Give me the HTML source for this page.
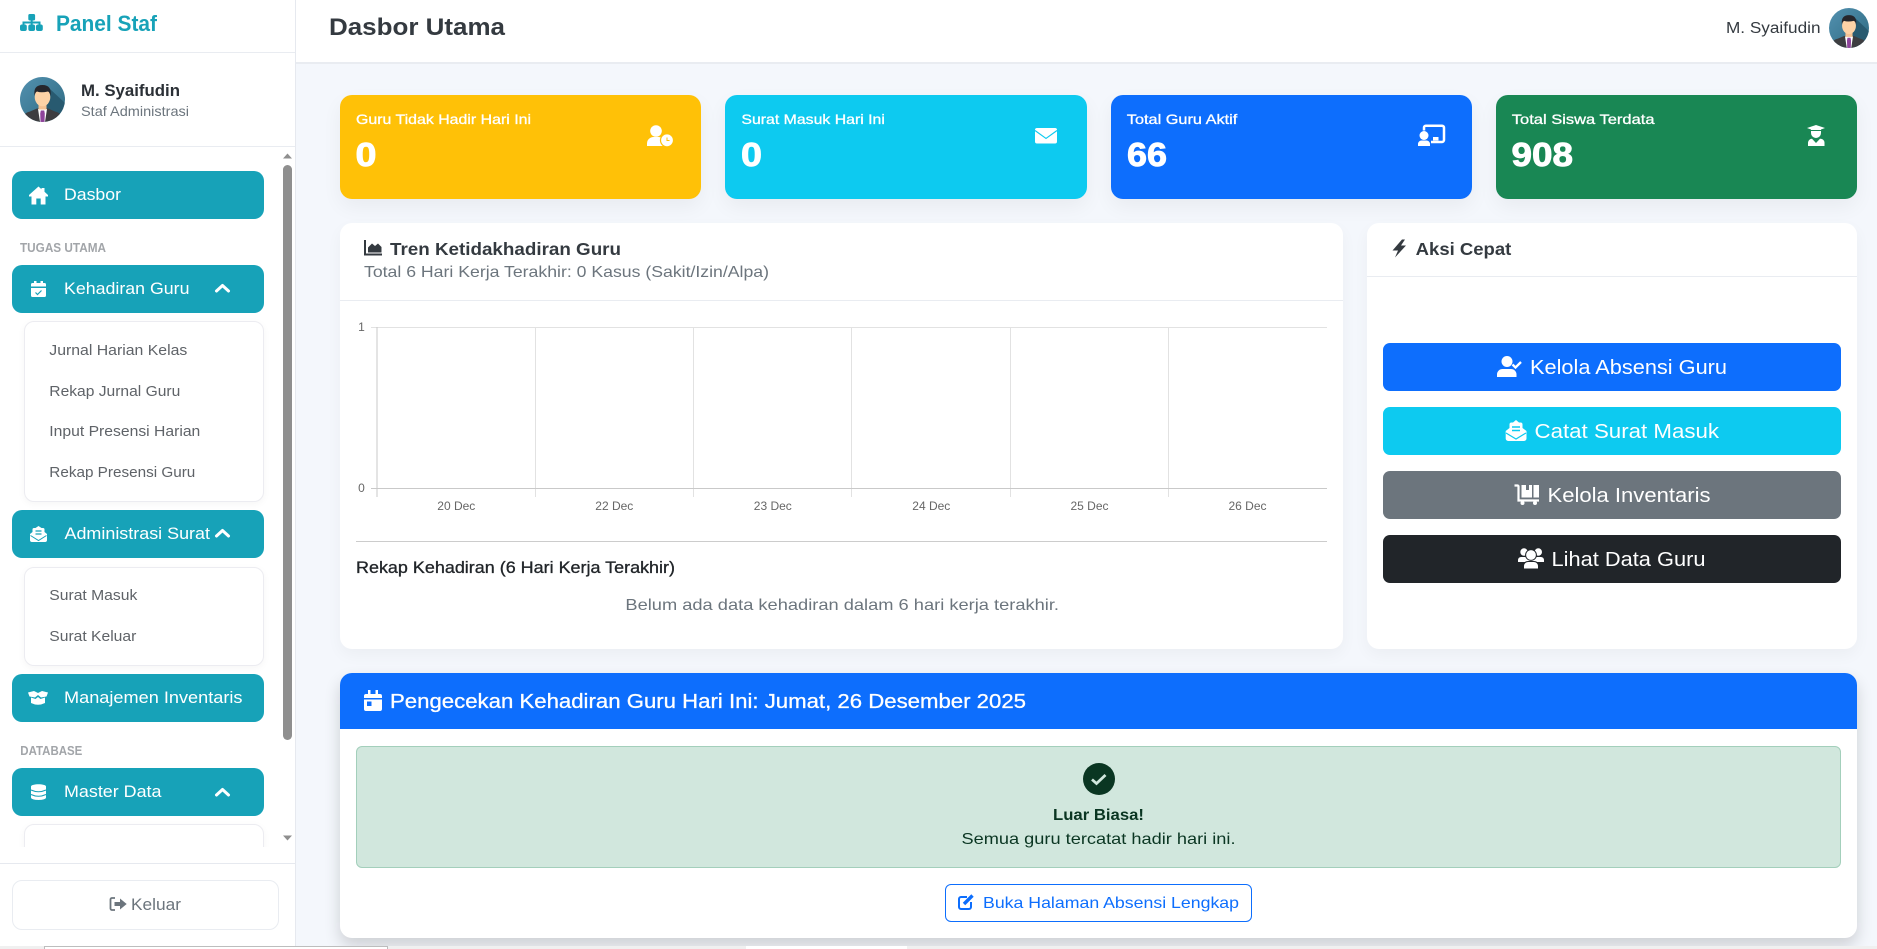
<!DOCTYPE html>
<html lang="id"><head><meta charset="utf-8"><title>Dasbor Utama</title>
<style>
html,body{margin:0;padding:0;width:1877px;height:949px;overflow:hidden;background:#f4f7fc;font-family:"Liberation Sans",sans-serif}
.b{position:absolute;box-sizing:border-box}
.nav{left:12px;width:252px;height:48px;background:#17a2b8;border-radius:10px}
.sub{left:24px;width:240px;background:#fff;border:1px solid #ececf1;border-radius:10px;box-shadow:0 2px 8px rgba(0,0,0,.04)}
.stat{top:95px;height:104px;border-radius:12px;box-shadow:0 8px 20px rgba(0,0,0,.05)}
.card{background:#fff;border-radius:12px;box-shadow:0 6px 16px rgba(0,0,0,.04)}
.btn{left:1383px;width:458px;height:48px;border-radius:7px}
svg text{font-family:"Liberation Sans",sans-serif;fill:currentColor}
.m{stroke:currentColor;stroke-width:.3px}
.n{stroke:currentColor;stroke-width:.9px}
</style></head><body>

<div class="b" style="left:296px;top:0;width:1581px;height:64px;background:#fff;border-bottom:2px solid #e9ecf1"></div>

<div class="b stat" style="left:340px;width:361px;background:#ffc107"></div>
<div class="b stat" style="left:725px;width:362px;background:#0dcaf0"></div>
<div class="b stat" style="left:1111px;width:361px;background:#0d6efd"></div>
<div class="b stat" style="left:1496px;width:361px;background:#198754"></div>

<div class="b card" style="left:340px;top:223px;width:1003px;height:426px"></div>
<div class="b" style="left:340px;top:300px;width:1003px;height:1px;background:#e9ecf1"></div>
<div class="b card" style="left:1367px;top:223px;width:490px;height:426px"></div>
<div class="b" style="left:1367px;top:276px;width:490px;height:1px;background:#e9ecf1"></div>

<div class="b btn" style="top:343px;background:#0d6efd"></div>
<div class="b btn" style="top:407px;background:#0dcaf0"></div>
<div class="b btn" style="top:471px;background:#6c757d"></div>
<div class="b btn" style="top:535px;background:#212529"></div>

<div class="b" style="left:340px;top:673px;width:1517px;height:265px;background:#fff;border-radius:12px;box-shadow:0 8px 16px rgba(0,0,0,.16)"></div>
<div class="b" style="left:340px;top:673px;width:1517px;height:56px;background:#0d6efd;border-radius:12px 12px 0 0"></div>
<div class="b" style="left:356px;top:746px;width:1485px;height:122px;background:#d1e7dd;border:1px solid #a3cfbb;border-radius:6px"></div>
<div class="b" style="left:945px;top:884px;width:307px;height:38px;background:#fff;border:1px solid #0d6efd;border-radius:6px"></div>

<div class="b" style="left:0;top:0;width:296px;height:946px;background:#fff;border-right:1px solid #e6e9ef"></div>
<div class="b" style="left:0;top:52px;width:295px;height:1px;background:#e9ecf1"></div>
<div class="b" style="left:0;top:146px;width:295px;height:1px;background:#e9ecf1"></div>
<div class="b nav" style="top:171px"></div>
<div class="b nav" style="top:265px"></div>
<div class="b sub" style="top:321px;height:181px"></div>
<div class="b nav" style="top:510px"></div>
<div class="b sub" style="top:567px;height:99px"></div>
<div class="b nav" style="top:674px"></div>
<div class="b nav" style="top:768px"></div>
<div class="b sub" style="top:824px;height:60px"></div>
<div class="b" style="left:0;top:847px;width:295px;height:99px;background:#fff"></div>
<div class="b" style="left:0;top:863px;width:295px;height:1px;background:#e6e9ef"></div>
<div class="b" style="left:12px;top:880px;width:267px;height:50px;background:#fff;border:1px solid #e9ecf1;border-radius:10px"></div>
<div class="b" style="left:283px;top:165px;width:9px;height:575px;background:#8f8f8f;border-radius:5px"></div>

<div class="b" style="left:0;top:946px;width:1877px;height:3px;background:#f0f0f0"></div>
<div class="b" style="left:44px;top:946px;width:344px;height:3px;background:#fff;border:1px solid #bdbdbd;border-bottom:0"></div>
<div class="b" style="left:746px;top:946px;width:161px;height:3px;background:#fff"></div>

<svg class="b" style="left:0;top:0" width="1877" height="949" viewBox="0 0 1877 949" xmlns="http://www.w3.org/2000/svg">
<defs>
<linearGradient id="ag" x1="0" y1="0" x2="1" y2="1"><stop offset="0" stop-color="#5391b0"/><stop offset="1" stop-color="#2d6980"/></linearGradient>
<clipPath id="ac"><circle cx="22.5" cy="22.5" r="22.5"/></clipPath>
<symbol id="av" viewBox="0 0 45 45"><g clip-path="url(#ac)">
<rect width="45" height="45" fill="url(#ag)"/>
<path d="M30 12L45 26V45H26L22 20Z" fill="#285a70"/>
<path d="M3 45V40Q4 36 10 34.5L17 31.5H28L35 34.5Q41 36 42 40V45Z" fill="#3d3d40"/>
<path d="M18 32L22.5 41L27 32Z" fill="#fff"/><path d="M18 32L20 45H25L27 32L22.5 37Z" fill="#fff"/>
<rect x="18.5" y="25" width="8" height="7.500" fill="#f4c193"/>
<ellipse cx="22.5" cy="20" rx="7.800" ry="9.300" fill="#fdd2a6"/>
<path d="M14.500 19Q13 8 22.5 8Q32 8 30.500 19Q30 15.500 28 14.500Q21 16 17 14.500Q15 15.500 14.500 19Z" fill="#26262c"/>
<path d="M20.800 33.500H24.200L24.800 36.500L24.500 45H20.500L20.200 36.500Z" fill="#8e449b"/>
</g></symbol>
</defs>

<!-- sidebar -->
<g fill="#17a2b8">
<rect x="28.300" y="14" width="6.800" height="6.500" rx="1.500"/><rect x="30.700" y="20" width="2" height="4.500"/><rect x="23" y="21.500" width="17" height="2"/><rect x="22.500" y="21.500" width="2" height="3.500"/><rect x="38.500" y="21.500" width="2" height="3.500"/>
<rect x="20" y="24.500" width="6.800" height="6.500" rx="2"/><rect x="28.300" y="24.500" width="6.800" height="6.500" rx="2"/><rect x="36" y="24.500" width="6.800" height="6.500" rx="2"/>
</g>
<text x="56" y="31" textLength="101" lengthAdjust="spacingAndGlyphs" font-size="22" font-weight="700" style="color:#17a2b8">Panel Staf</text>
<use href="#av" x="20" y="77" width="45" height="45"/>
<text x="81" y="96" textLength="99" lengthAdjust="spacingAndGlyphs" font-size="16.500" font-weight="700" style="color:#2b3036">M. Syaifudin</text>
<text x="81" y="116" textLength="108" lengthAdjust="spacingAndGlyphs" font-size="13.800" style="color:#6c757d">Staf Administrasi</text>
<path d="M283 158.500L287.500 153.500L292 158.500Z M283 835.500L287.500 840.500L292 835.500Z" fill="#8f8f8f"/>

<g fill="#fff" style="color:#fff">
<path d="M38.500 186.500L29 195V196.500H31.500V204.500H36.300V198.500H40.700V204.500H45.500V196.500H48V195L44.500 191.800V188H41.500V189.200Z"/>
<text x="64" y="200" textLength="57" lengthAdjust="spacingAndGlyphs" font-size="16.500">Dasbor</text>
<text x="64" y="294" textLength="125.500" lengthAdjust="spacingAndGlyphs" font-size="16.500">Kehadiran Guru</text>
<text x="64.500" y="539" textLength="145.500" lengthAdjust="spacingAndGlyphs" font-size="16.500">Administrasi Surat</text>
<text x="64" y="703" textLength="178.500" lengthAdjust="spacingAndGlyphs" font-size="16.500">Manajemen Inventaris</text>
<text x="64" y="797" textLength="97.500" lengthAdjust="spacingAndGlyphs" font-size="16.500">Master Data</text>
</g>
<g fill="none" stroke="#fff" stroke-width="3" stroke-linecap="round" stroke-linejoin="round">
<path d="M216.500 291L222.500 285.500L228.500 291"/><path d="M216.500 536L222.500 530.500L228.500 536"/><path d="M216.500 795L222.500 789.500L228.500 795"/>
</g>
<!-- calendar check -->
<path d="M31 286.500V284.500A1.500 1.500 0 0 1 32.500 283H34V281H36.500V283H40.500V281H43V283H44.500A1.500 1.500 0 0 1 46 284.500V286.500ZM31 288H46V295.500A1.500 1.500 0 0 1 44.500 297H32.500A1.500 1.500 0 0 1 31 295.500Z" fill="#fff"/>
<path d="M35.500 292.500L37.500 294.500L41.500 290.500" fill="none" stroke="#17a2b8" stroke-width="1.200"/>
<!-- envelope open -->
<path d="M30 534L32.500 532V529.500A1.500 1.500 0 0 1 34 528H35.500L38.500 526L41.500 528H43A1.500 1.500 0 0 1 44.500 529.500V532L47 534V540A2 2 0 0 1 45 542H32A2 2 0 0 1 30 540Z" fill="#fff"/>
<path d="M30.500 535.500L38.500 540.500L46.500 535.500" fill="none" stroke="#17a2b8" stroke-width="1"/><path d="M35.500 531H41.500M35.500 534H41.500" stroke="#17a2b8" stroke-width="1.200"/>
<!-- boxes -->
<path d="M28 692.500L34 691L38 693L42 691L48 692.500L46.500 696.500L41 697.500L38 695L35 697.500L29.500 696.500Z M31 697.500L35.500 699L38 697L40.500 699L45 697.500V703Q38 706.500 31 703Z" fill="#fff"/>
<!-- database -->
<path d="M31 786.500C31 783.500 46 783.500 46 786.500V797.500C46 800.800 31 800.800 31 797.500Z" fill="#fff"/>
<path d="M31 790Q38.500 793.500 46 790M31 794.500Q38.500 798 46 794.500" fill="none" stroke="#17a2b8" stroke-width="1.100"/>

<g font-size="12.500" font-weight="700" style="color:#a2a5a9">
<text x="20" y="252" textLength="86" lengthAdjust="spacingAndGlyphs">TUGAS UTAMA</text>
<text x="20.300" y="755" textLength="62" lengthAdjust="spacingAndGlyphs">DATABASE</text>
</g>
<g font-size="15" style="color:#5f6368">
<text x="49.300" y="355" textLength="138" lengthAdjust="spacingAndGlyphs">Jurnal Harian Kelas</text>
<text x="49.300" y="396" textLength="131" lengthAdjust="spacingAndGlyphs">Rekap Jurnal Guru</text>
<text x="49.300" y="436" textLength="151" lengthAdjust="spacingAndGlyphs">Input Presensi Harian</text>
<text x="49.300" y="477" textLength="146" lengthAdjust="spacingAndGlyphs">Rekap Presensi Guru</text>
<text x="49.300" y="600" textLength="88" lengthAdjust="spacingAndGlyphs">Surat Masuk</text>
<text x="49.300" y="641" textLength="87" lengthAdjust="spacingAndGlyphs">Surat Keluar</text>
</g>
<path d="M115 898H112A1.500 1.500 0 0 0 110.500 899.500V908.500A1.500 1.500 0 0 0 112 910H115" fill="none" stroke="#6c757d" stroke-width="1.800"/>
<path d="M114.500 902H120V898.500L126.700 904L120 909.500V906H114.500Z" fill="#6c757d"/>
<text x="131" y="910" textLength="50" lengthAdjust="spacingAndGlyphs" font-size="16.500" style="color:#6c757d">Keluar</text>

<!-- header -->
<text x="329" y="35" textLength="176" lengthAdjust="spacingAndGlyphs" font-size="24" font-weight="700" style="color:#343a40">Dasbor Utama</text>
<text x="1726" y="33" textLength="94.500" lengthAdjust="spacingAndGlyphs" font-size="15.500" style="color:#343a40">M. Syaifudin</text>
<use href="#av" x="1829" y="8" width="40" height="40"/>

<!-- stat cards -->
<g style="color:#fff">
<g font-size="14">
<text class="m" x="356" y="124" textLength="175" lengthAdjust="spacingAndGlyphs">Guru Tidak Hadir Hari Ini</text>
<text class="m" x="741.400" y="124" textLength="143.500" lengthAdjust="spacingAndGlyphs">Surat Masuk Hari Ini</text>
<text class="m" x="1126.800" y="124" textLength="110.500" lengthAdjust="spacingAndGlyphs">Total Guru Aktif</text>
<text class="m" x="1511.800" y="124" textLength="142.700" lengthAdjust="spacingAndGlyphs">Total Siswa Terdata</text>
</g>
<g font-size="33.500" font-weight="700">
<text class="n" x="355.500" y="166" textLength="21" lengthAdjust="spacingAndGlyphs">0</text>
<text class="n" x="741" y="166" textLength="21" lengthAdjust="spacingAndGlyphs">0</text>
<text class="n" x="1127" y="166" textLength="40" lengthAdjust="spacingAndGlyphs">66</text>
<text class="n" x="1511.500" y="166" textLength="61.500" lengthAdjust="spacingAndGlyphs">908</text>
</g>
</g>
<!-- user clock -->
<circle cx="656" cy="131" r="5.800" fill="#fff"/><path d="M647 146V143.500A6.500 6.500 0 0 1 653.500 137H658.500A6.500 6.500 0 0 1 664 140V146Z" fill="#fff"/>
<circle cx="667" cy="140.300" r="6.500" fill="#fff" stroke="#ffc107" stroke-width="1.200"/><path d="M667 137.500V140.500H669.500" fill="none" stroke="#ffc107" stroke-width="1"/>
<!-- envelope -->
<rect x="1035" y="128" width="22" height="15.500" rx="2" fill="#fff"/><path d="M1035 130.500L1046 138.500L1057 130.500" fill="none" stroke="#0dcaf0" stroke-width="1.100"/>
<!-- chalkboard -->
<path d="M1424 130.500V127.500A1.800 1.800 0 0 1 1425.800 125.700H1442A2 2 0 0 1 1444 127.700V140A2 2 0 0 1 1442 142H1431" fill="none" stroke="#fff" stroke-width="2.500"/>
<rect x="1433" y="137" width="5.500" height="3.500" fill="#fff"/>
<circle cx="1424" cy="135.500" r="4.500" fill="#fff"/><path d="M1418 146V143.500A3.500 3.500 0 0 1 1421.500 140.500H1426.500A3.500 3.500 0 0 1 1430 143.500V146Z" fill="#fff"/>
<!-- graduate -->
<path d="M1816 125L1825 128L1821 129.500V133A5 5 0 0 1 1811 133V129.500L1807 128Z" fill="#fff"/><path d="M1811 130.500H1821" stroke="#198754" stroke-width="1"/>
<path d="M1808 146V142.500A4 4 0 0 1 1812 138.800L1816 143L1820 138.800A4 4 0 0 1 1824.500 142.500V146Z" fill="#fff"/>

<!-- chart card -->
<path d="M365 240V254.500H382" fill="none" stroke="#343a40" stroke-width="2"/>
<path d="M368 252.500V247.500L372 243.500L375 246L378 243.500L381.500 247V252.500Z" fill="#343a40"/>
<text x="390" y="255" textLength="231" lengthAdjust="spacingAndGlyphs" font-size="17.600" font-weight="700" style="color:#343a40">Tren Ketidakhadiran Guru</text>
<text x="364" y="277" textLength="405" lengthAdjust="spacingAndGlyphs" font-size="16" style="color:#6c757d">Total 6 Hari Kerja Terakhir: 0 Kasus (Sakit/Izin/Alpa)</text>
<g stroke="#e2e2e2" stroke-width="1" fill="none" shape-rendering="crispEdges">
<path d="M535.500 327V497M693.500 327V497M851.500 327V497M1010.500 327V497M1168.500 327V497"/>
<path d="M371 327.500H1327"/>
</g>
<g stroke="#c9c9c9" stroke-width="1" fill="none" shape-rendering="crispEdges">
<path d="M377 327V497M371 488.500H1327"/>
</g>
<g font-size="12" style="color:#666" text-anchor="middle">
<text x="456.300" y="510">20 Dec</text><text x="614.300" y="510">22 Dec</text><text x="772.800" y="510">23 Dec</text><text x="931.300" y="510">24 Dec</text><text x="1089.500" y="510">25 Dec</text><text x="1247.500" y="510">26 Dec</text>
<text x="361.500" y="331">1</text><text x="361.500" y="492">0</text>
</g>
<rect x="356" y="541" width="971" height="1" fill="#ccc"/>
<text class="m" x="356" y="573" textLength="319" lengthAdjust="spacingAndGlyphs" font-size="16.500" style="color:#212529">Rekap Kehadiran (6 Hari Kerja Terakhir)</text>
<text x="625.400" y="610" textLength="433.600" lengthAdjust="spacingAndGlyphs" font-size="16" style="color:#6c757d">Belum ada data kehadiran dalam 6 hari kerja terakhir.</text>

<!-- aksi cepat -->
<path d="M1402 239.500L1392.500 250.500H1398L1395 257.500L1406 245.500H1401L1405 239.500Z" fill="#343a40"/>
<text x="1415.700" y="255" textLength="95.600" lengthAdjust="spacingAndGlyphs" font-size="17.600" font-weight="700" style="color:#343a40">Aksi Cepat</text>
<g font-size="20.500" style="color:#fff">
<text x="1530" y="374" textLength="197" lengthAdjust="spacingAndGlyphs">Kelola Absensi Guru</text>
<text x="1534.500" y="438" textLength="184.500" lengthAdjust="spacingAndGlyphs">Catat Surat Masuk</text>
<text x="1547.500" y="502" textLength="163" lengthAdjust="spacingAndGlyphs">Kelola Inventaris</text>
<text x="1551.500" y="566" textLength="154" lengthAdjust="spacingAndGlyphs">Lihat Data Guru</text>
</g>
<!-- user check -->
<circle cx="1507" cy="361.500" r="5.500" fill="#fff"/><path d="M1497 377V374.500A5.500 5.500 0 0 1 1502.500 369H1511A5.500 5.500 0 0 1 1516.500 374.500V377Z" fill="#fff"/>
<path d="M1512.500 364.500L1515.500 367.500L1521 362" fill="none" stroke="#fff" stroke-width="2.300"/>
<!-- env open -->
<path d="M1505.700 431L1509.500 428V424.500A2 2 0 0 1 1511.500 422.500H1513L1516 420L1519 422.500H1520.500A2 2 0 0 1 1522.500 424.500V428L1526.500 431V438.500A2.500 2.500 0 0 1 1524 441H1508.200A2.500 2.500 0 0 1 1505.700 438.500Z" fill="#fff"/>
<path d="M1506 433L1516 439L1526 433" fill="none" stroke="#0dcaf0" stroke-width="1.200"/><path d="M1512 427H1520M1512 430.500H1520" stroke="#0dcaf0" stroke-width="1.500"/>
<!-- dolly -->
<path d="M1514.500 485.500H1517.500A1 1 0 0 1 1518.500 486.500V500.500H1539" fill="none" stroke="#fff" stroke-width="2.200"/>
<path d="M1521.500 485H1526V490H1529V485H1532V497.500H1521.500ZM1533.500 485H1539V497.500H1533.500Z" fill="#fff"/>
<circle cx="1522.500" cy="503" r="2" fill="#fff"/><circle cx="1535" cy="503" r="2" fill="#fff"/>
<!-- users -->
<circle cx="1524" cy="552" r="3.700" fill="#fff"/><circle cx="1538.300" cy="552" r="3.700" fill="#fff"/>
<path d="M1518 562V560A3 3 0 0 1 1521 557H1541A3 3 0 0 1 1544 560V562Z" fill="#fff"/>
<circle cx="1531" cy="555" r="5.400" fill="#fff" stroke="#212529" stroke-width="1"/>
<path d="M1523.500 569V566.500A4.500 4.500 0 0 1 1528 561.500H1534A4.500 4.500 0 0 1 1538.500 566.500V569Z" fill="#fff" stroke="#212529" stroke-width="1"/>

<!-- attendance card -->
<path d="M364 696A2 2 0 0 1 366 694H368V690H370.500V694H375.500V690H378V694H380A2 2 0 0 1 382 696V698H364ZM364 699.500H382V709A2 2 0 0 1 380 711H366A2 2 0 0 1 364 709Z" fill="#fff"/>
<rect x="367" y="701.500" width="4.500" height="4.500" fill="#0d6efd"/>
<text class="m" x="390" y="708" textLength="636" lengthAdjust="spacingAndGlyphs" font-size="20" style="color:#fff">Pengecekan Kehadiran Guru Hari Ini: Jumat, 26 Desember 2025</text>
<circle cx="1099" cy="779" r="16" fill="#0a3622"/>
<path d="M1092 779.500L1096.500 783.500L1105.500 775" fill="none" stroke="#d1e7dd" stroke-width="2.800"/>
<text x="1053" y="820" textLength="91" lengthAdjust="spacingAndGlyphs" font-size="16" font-weight="700" style="color:#0a3622">Luar Biasa!</text>
<text x="961.500" y="844" textLength="274" lengthAdjust="spacingAndGlyphs" font-size="16" style="color:#0a3622">Semua guru tercatat hadir hari ini.</text>
<path d="M967 897H961A2 2 0 0 0 959 899V907A2 2 0 0 0 961 909H969A2 2 0 0 0 971 907V902" fill="none" stroke="#0d6efd" stroke-width="2"/>
<path d="M964 904L972.500 895.500" stroke="#0d6efd" stroke-width="3.400" fill="none"/>
<text x="983" y="908" textLength="256" lengthAdjust="spacingAndGlyphs" font-size="16" style="color:#0d6efd">Buka Halaman Absensi Lengkap</text>
</svg>
</body></html>
